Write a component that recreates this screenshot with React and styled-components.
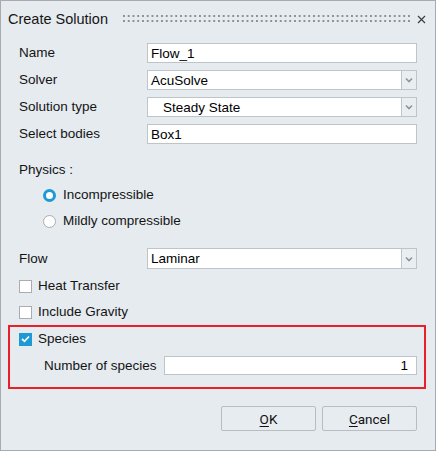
import React from 'react';
import styled, { createGlobalStyle } from 'styled-components';

const GlobalStyle = createGlobalStyle`
  body {
    margin: 0;
    font-family: "Liberation Sans", Arial, sans-serif;
  }
`;

function Chevron() {
  return (
    <svg width="8" height="6" viewBox="0 0 8 6">
      <path d="M1 1.5 L4 4.5 L7 1.5" fill="none" stroke="#8f9499" strokeWidth="1.6" />
    </svg>
  );
}

function Select({ value, indent }) {
  return (
    <SelectWrap>
      <SelectBox indent={indent}>{value}</SelectBox>
      <DropBtn>
        <Chevron />
      </DropBtn>
    </SelectWrap>
  );
}

function Radio({ checked, label }) {
  return (
    <OptionRow>
      <RadioDot checked={checked} />
      <span>{label}</span>
    </OptionRow>
  );
}

function Check({ checked, label }) {
  return (
    <OptionRow>
      <CheckBox checked={checked}>
        {checked && (
          <svg width="9" height="8" viewBox="0 0 9 8">
            <path d="M1 4 L3.5 6.3 L8 1.5" fill="none" stroke="#fff" strokeWidth="1.7" />
          </svg>
        )}
      </CheckBox>
      <span>{label}</span>
    </OptionRow>
  );
}

export default function App() {
  return (
    <>
      <GlobalStyle />
      <Dialog>
        <TitleBar>
          <Title>Create Solution</Title>
          <Grip />
          <CloseBtn>
            <svg width="9" height="9" viewBox="0 0 9 9">
              <path d="M1 1 L8 8 M8 1 L1 8" stroke="#3a3d40" strokeWidth="1.2" />
            </svg>
          </CloseBtn>
        </TitleBar>
        <Form>
          <FieldGrid>
            <Label>Name</Label>
            <TextInput>Flow_1</TextInput>
            <Label>Solver</Label>
            <Select value="AcuSolve" />
            <Label>Solution type</Label>
            <Select value="Steady State" indent />
            <Label>Select bodies</Label>
            <TextInput>Box1</TextInput>
          </FieldGrid>

          <SectionLabel>Physics :</SectionLabel>
          <RadioGroup>
            <Radio checked label="Incompressible" />
            <Radio label="Mildly compressible" />
          </RadioGroup>

          <FlowGrid>
            <Label>Flow</Label>
            <Select value="Laminar" />
          </FlowGrid>

          <CheckGroup>
            <Check label="Heat Transfer" />
            <Check label="Include Gravity" />
          </CheckGroup>

          <Highlight>
            <Check checked label="Species" />
            <SpeciesRow>
              <span>Number of species</span>
              <NumberInput>1</NumberInput>
            </SpeciesRow>
          </Highlight>

          <Buttons>
            <Button>
              <u>O</u>K
            </Button>
            <Button>
              <u>C</u>ancel
            </Button>
          </Buttons>
        </Form>
      </Dialog>
    </>
  );
}

const Dialog = styled.div`
  width: 436px;
  height: 451px;
  box-sizing: border-box;
  border: 1px solid #a7abaf;
  background: #e5ebef;
  color: #141414;
  font-size: 13.5px;
  display: flex;
  flex-direction: column;
`;

const TitleBar = styled.div`
  height: 36px;
  display: flex;
  align-items: center;
  padding: 0 9px 0 7px;
`;

const Title = styled.div`
  font-size: 14.5px;
  color: #151515;
`;

const Grip = styled.div`
  flex: 1;
  align-self: flex-start;
  margin: 14px 7px 0 15px;
  height: 7px;
  background-image: radial-gradient(circle at 1px 1px, #8b9094 0.9px, transparent 1.3px);
  background-size: 4.75px 5px;
`;

const CloseBtn = styled.div`
  width: 9px;
  height: 9px;
  display: flex;
  margin-top: 1px;
`;

const Form = styled.div`
  padding: 6px 18px 0 18px;
  display: flex;
  flex-direction: column;
`;

const FieldGrid = styled.div`
  display: grid;
  grid-template-columns: 128px 1fr;
  grid-auto-rows: 20px;
  row-gap: 7px;
  align-items: center;
`;

const FlowGrid = styled(FieldGrid)`
  grid-auto-rows: 21px;
  margin-top: 19px;
`;

const Label = styled.div`
  line-height: 16px;
`;

const TextInput = styled.div`
  height: 100%;
  box-sizing: border-box;
  border: 1px solid #bfc4c8;
  background: #fff;
  padding: 0 3px;
  display: flex;
  align-items: center;
  color: #000;
`;

const SelectWrap = styled.div`
  height: 100%;
  display: flex;
`;

const SelectBox = styled(TextInput)`
  flex: 1;
  padding-left: ${(p) => (p.indent ? '15px' : '3px')};
`;

const DropBtn = styled.div`
  width: 15px;
  box-sizing: border-box;
  border: 1px solid #bfc4c8;
  border-left: none;
  background: #e9eef1;
  display: flex;
  align-items: center;
  justify-content: center;
`;

const SectionLabel = styled.div`
  margin-top: 18px;
  line-height: 16px;
`;

const RadioGroup = styled.div`
  margin-top: 9px;
  padding-left: 24px;
  display: flex;
  flex-direction: column;
  gap: 10px;
`;

const OptionRow = styled.div`
  display: flex;
  align-items: center;
  gap: 6px;
  line-height: 16px;
`;

const RadioDot = styled.span`
  width: 13px;
  height: 13px;
  box-sizing: border-box;
  border-radius: 50%;
  border: ${(p) => (p.checked ? '3.5px solid #1d9ad6' : '1px solid #a9adb1')};
  background: #fff;
  margin-right: 1px;
`;

const CheckGroup = styled.div`
  margin-top: 9px;
  display: flex;
  flex-direction: column;
  gap: 10px;
`;

const CheckBox = styled.span`
  width: 13px;
  height: 13px;
  box-sizing: border-box;
  border: 1px solid ${(p) => (p.checked ? '#1d9ad6' : '#a9adb1')};
  background: ${(p) => (p.checked ? '#1d9ad6' : '#fff')};
  display: flex;
  align-items: center;
  justify-content: center;
`;

const Highlight = styled.div`
  margin: 5px -9px 0 -11px;
  height: 64px;
  box-sizing: border-box;
  border: 2px solid #e8202a;
  padding: 4px 7px 0 9px;
  display: flex;
  flex-direction: column;
`;

const SpeciesRow = styled.div`
  margin-top: 9px;
  padding-left: 25px;
  display: flex;
  align-items: center;
  gap: 7px;
`;

const NumberInput = styled(TextInput)`
  flex: 1;
  height: 19px;
  justify-content: flex-end;
  padding-right: 8px;
`;

const Buttons = styled.div`
  margin-top: 17px;
  display: flex;
  justify-content: flex-end;
  gap: 6px;
`;

const Button = styled.div`
  width: 95px;
  height: 25px;
  box-sizing: border-box;
  border: 1px solid #b9bdc1;
  border-radius: 2px;
  background: #e7ecf0;
  display: flex;
  align-items: center;
  justify-content: center;
  font-family: Roboto, "Liberation Sans", sans-serif;
  font-size: 13.5px;
  color: #111;
  u {
    text-underline-offset: 2px;
  }
`;
